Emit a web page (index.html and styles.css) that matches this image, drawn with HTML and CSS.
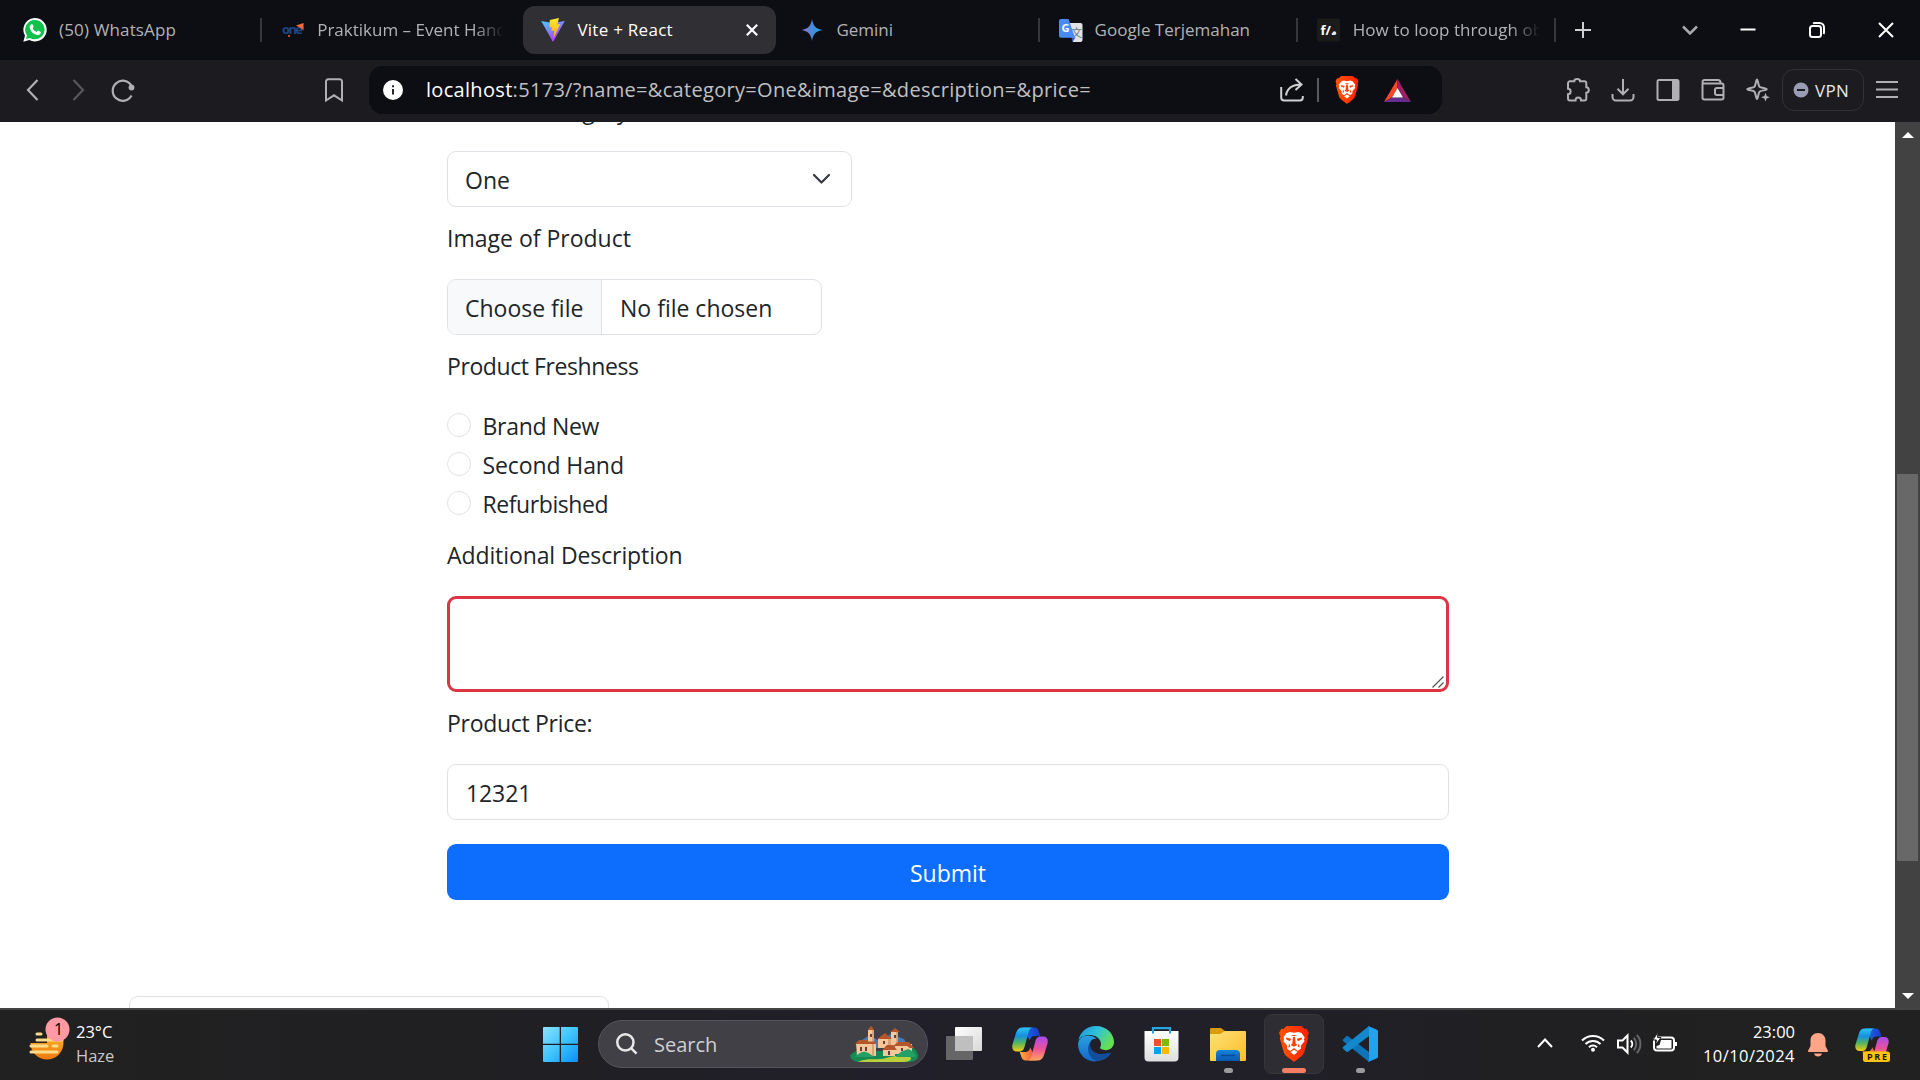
FILE: index.html
```html
<!DOCTYPE html>
<html lang="en">
<head>
<meta charset="utf-8">
<title>Vite + React</title>
<link rel="stylesheet" href="styles.css">
</head>
<body>
<svg class="defs" width="0" height="0" aria-hidden="true">
  <defs>
    <linearGradient id="lionfill" x1="0" x2="1"><stop offset="0" stop-color="#ff5500"/><stop offset="1" stop-color="#ff2000"/></linearGradient>
    <linearGradient id="cp1" x1="0" y1="0" x2="0" y2="1"><stop offset="0" stop-color="#2cc4f0"/><stop offset=".35" stop-color="#1590e0"/><stop offset=".65" stop-color="#55b560"/><stop offset="1" stop-color="#f2cc10"/></linearGradient>
    <linearGradient id="cp2" x1="0" y1="0" x2="0" y2="1"><stop offset="0" stop-color="#a64cf0"/><stop offset=".5" stop-color="#ee4f9a"/><stop offset="1" stop-color="#ffa45c"/></linearGradient>
    <linearGradient id="cp3" x1="0" x2="1"><stop offset="0" stop-color="#1a6fe0"/><stop offset="1" stop-color="#1b38c8"/></linearGradient>
    <linearGradient id="cp4" x1="0" x2="1"><stop offset="0" stop-color="#ffb040"/><stop offset="1" stop-color="#ee4040"/></linearGradient>
  </defs>
  <symbol id="lion" viewBox="0 0 30 36">
    <path class="lion-shield" d="M7.5 0h15l3.2 3 2-.2L30 7l-1.4 3 .6 2.2-3.7 13.3c-.6 2.2-1.6 3.6-3.4 4.9L15 36l-7.1-5.6c-1.8-1.3-2.8-2.7-3.4-4.9L.8 12.200 1.400 10 0 7l2.300-4.200 2 .2z"/>
    <path fill="#fff" d="M15 6.800l4.400-.900 3.100 1.100 3.100 4.300-.700 2.400.7 1.400-3.800 4.700.2 2.700-3.200 2.400L15 22l-3.800 2.900L8 22.500l.2-2.700-3.800-4.700.7-1.400-.7-2.400L7.500 7l3.100-1.100zM15 23.800l3.600 2.200-3.600 3-3.600-3z"/>
    <path class="lion-detail" d="M7 11.500l5.200 1.300-1.200 2.400-3.600-1.700zM23 11.500l-5.200 1.300 1.200 2.400 3.600-1.700zM11.800 9.300L15 9l3.200.3L15 10.200zM14 11h2l.7 6.500 1.600 1.400L15 20.700l-3.300-1.800 1.600-1.400zM10 17l1.300 3.500-1.900 1.300zM20 17l-1.300 3.500 1.900 1.300z"/>
  </symbol>
  <symbol id="copilot" viewBox="0 0 36 34">
    <path fill="url(#cp3)" d="M11 .5h11c3 0 4.200 2 5 4.800l1.200 3.700h-5.500c-3 0-4.200 2-5 4.500z"/>
    <path fill="url(#cp4)" d="M25 33.500H14c-3 0-4.200-2-5-4.800L7.800 25h5.500c3 0 4.200-2 5-4.500z"/>
    <path fill="url(#cp1)" d="M10.500.5H21c-2.600 0-3.600 2-4.300 4.300L12.800 19c-.9 3.200-2 5.500-5.500 5.500H5c-4 0-5.500-3-4.500-7L4 6C5 2.500 7 .5 10.500.5z"/>
    <path fill="url(#cp2)" d="M25.500 33.500H15c2.600 0 3.600-2 4.300-4.300L23.200 15c.9-3.200 2-5.500 5.500-5.500H31c4 0 5.500 3 4.500 7L32 28c-1 3.500-3 5.500-6.500 5.500z"/>
  </symbol>
</svg>

<div class="screen">
  <header class="tabstrip">
    <div class="tab">
      <svg class="favicon" viewBox="0 0 24 24"><path fill="#fff" d="M.3 23.800l1.700-6A11.700 11.700 0 1 1 6.300 22z"/><path fill="#12c04c" d="M3 21l1-3.700A9.700 9.700 0 1 1 7 20z"/><path fill="#fff" d="M8.200 6.300c.5-.5 1.200-.4 1.500.2l.8 1.900c.1.400 0 .8-.3 1.100l-.6.7c.9 1.700 2.200 2.900 4 3.700l.9-1c.3-.3.600-.4 1-.2l1.900 1c.4.200.5.500.4 1-.3 1.600-1.900 2.600-3.500 2.300-4.200-.8-7.100-3.900-7.600-7.400-.1-1.300.5-2.500 1.500-3.300z"/></svg>
      <span class="tab-title t-wa">(50) WhatsApp</span>
    </div>
    <div class="tab ruled">
      <svg class="favicon" viewBox="0 0 24 24"><text class="one-mark" x="1" y="16" textLength="21">one</text><path fill="#f26a3c" d="M15 7.500L22.500 5v7.500l-2-2z"/><circle cx="8" cy="18" r="1" fill="#f26a3c"/></svg>
      <span class="tab-title fade">Praktikum – Event Handling</span>
    </div>
    <div class="tab active">
      <svg class="favicon" viewBox="0 0 24 24"><defs><linearGradient id="va" x1="0" y1="0" x2=".6" y2="1"><stop offset="0" stop-color="#41d1ff"/><stop offset="1" stop-color="#bd34fe"/></linearGradient><linearGradient id="vb" x1="0" y1="0" x2="0" y2="1"><stop offset="0" stop-color="#ffea3d"/><stop offset="1" stop-color="#ffa800"/></linearGradient></defs><path fill="url(#va)" d="M.2 3l11.500 2L23.800 3 12 24z"/><path fill="url(#vb)" d="M8.800 2L18 0l-1.700 6.500 3-.6L12.500 20l.8-7.500-3 .6.500-4L8.500 9.500z"/></svg>
      <span class="tab-title t-vi">Vite + React</span>
      <svg class="tab-close" viewBox="0 0 12 12"><path d="M.8.8l10.400 10.400M11.200.8L.8 11.200"/></svg>
    </div>
    <div class="tab">
      <svg class="favicon" viewBox="0 0 24 24"><defs><linearGradient id="ge" x1="0" x2="1"><stop offset="0" stop-color="#9b72cb"/><stop offset=".45" stop-color="#4f88d6"/><stop offset="1" stop-color="#1ba1e3"/></linearGradient></defs><path fill="url(#ge)" d="M12 1c.8 6.500 4.300 10.200 10.500 11-6.200.8-9.700 4.500-10.500 11C11.200 16.500 7.700 12.800 1.500 12c6.200-.8 9.700-4.500 10.500-11z"/></svg>
      <span class="tab-title">Gemini</span>
    </div>
    <div class="tab ruled">
      <svg class="favicon" viewBox="0 0 24 24"><path fill="#e1e2e3" d="M10 5h11.500a2 2 0 0 1 2 2v15a2 2 0 0 1-2 2H14z"/><text class="han" x="12" y="19">文</text><path fill="#3b56c4" d="M12.500 19.500h4L13.500 24z"/><path fill="#4a8af4" d="M2 1h7.500l6.500 18.700H2a2 2 0 0 1-2-2V3a2 2 0 0 1 2-2z"/><text class="g-mark" x="2.500" y="13.500">G</text></svg>
      <span class="tab-title">Google Terjemahan</span>
    </div>
    <div class="tab ruled">
      <svg class="favicon" viewBox="0 0 24 24"><rect width="23" height="23" y=".5" rx="2" fill="#1b1b1b"/><text class="f-mark" x="3.500" y="17">f/.</text><circle cx="17.300" cy="15.200" r="1.900" fill="#e8e8e8"/></svg>
      <span class="tab-title fade t-ho">How to loop through objects</span>
    </div>
    <div class="newtab ruled"><svg viewBox="0 0 16 16" width="16" height="16"><path d="M8 0v16M0 8h16"/></svg></div>
    <div class="winbtns">
      <svg class="chev" viewBox="0 0 16 10"><path d="M1 1.500l7 7 7-7"/></svg>
      <svg viewBox="0 0 16 16"><path d="M.5 7.500h15"/></svg>
      <svg viewBox="0 0 16 16"><rect x="1" y="4" width="11" height="11" rx="2.500"/><path d="M4 1.500c.6-.4 1.200-.5 2-.5h4.500A4.500 4.500 0 0 1 15 5.500V10c0 .8-.1 1.400-.5 2"/></svg>
      <svg viewBox="0 0 16 16"><path d="M1 1l14 14M15 1L1 15"/></svg>
    </div>
  </header>

  <nav class="toolbar">
    <div class="navbtns">
      <svg viewBox="0 0 24 24"><path d="M16.500 2L7 12l9.500 10"/></svg>
      <svg class="dim" viewBox="0 0 24 24"><path d="M7.500 2L17 12 7.500 22"/></svg>
      <svg viewBox="0 0 24 24"><path d="M20.500 17.500A10 10 0 1 1 20.500 8"/><circle class="solid" cx="20.500" cy="9.500" r="2.900"/></svg>
    </div>
    <svg class="bookmark" viewBox="0 0 18 24"><path d="M1 3.500A2.200 2.200 0 0 1 3.200 1.300h11.600A2.200 2.200 0 0 1 17 3.500v19l-8-5.200-8 5.200z"/></svg>
    <div class="urlbar">
      <svg class="info" viewBox="0 0 20 20"><circle cx="10" cy="10" r="10" fill="#fff"/><path stroke="#101116" stroke-width="1.800" d="M10 9v5.500M10 5.200v2"/></svg>
      <span class="url"><b>localhost</b>:5173/?name=&amp;category=One&amp;image=&amp;description=&amp;price=</span>
      <svg class="share" viewBox="0 0 24 24"><path d="M1.200 9v10.500a3 3 0 0 0 3 3h15.600a3 3 0 0 0 3-3V18M6 17.500C7 10.500 12 6.500 21.500 6.500M15.500 1l6 5.500-6 5.500"/></svg>
      <i class="vline"></i>
      <svg class="lion small" viewBox="0 0 30 36"><use href="#lion"/></svg>
      <svg class="bat" viewBox="0 0 27 23"><path fill="#ff4724" d="M13.500 0v9L8 18.500 0 23z"/><path fill="#9e1f63" d="M13.500 0v9l5.500 9.500 8 4.500z"/><path fill="#662d91" d="M0 23l8-4.500h11l8 4.500z"/><path fill="#fff" d="M13.500 9L19 18.500H8z"/></svg>
    </div>
    <div class="tools">
      <svg viewBox="0 0 24 24"><path d="M2 5.300a2 2 0 0 1 2-2h4.300C8.300.3 14 .3 14 3.300h4.300a2 2 0 0 1 2 2v3.900c3.300 0 3.300 5.600 0 5.600v5.700a2 2 0 0 1-2 2H15c0-4-5.500-4-5.500 0H4a2 2 0 0 1-2-2v-4.300c3.500 0 3.500-5.500 0-5.500z"/></svg>
      <svg viewBox="0 0 24 24"><path d="M12 1v15M6.500 10.800L12 16.300l5.500-5.500M1.500 16v3a3.500 3.500 0 0 0 3.500 3.500h14a3.500 3.500 0 0 0 3.500-3.500v-3"/></svg>
      <svg viewBox="0 0 24 24"><rect x="1.500" y="2" width="21" height="20" rx="1.500"/><path class="solid" d="M16 2h6.500v20H16z"/></svg>
      <svg viewBox="0 0 24 24"><path d="M1.500 5v14.500a2 2 0 0 0 2 2h17a2 2 0 0 0 2-2V7.500a2 2 0 0 0-2-2h-17A2 2 0 0 1 1.500 3.800 2 2 0 0 1 3.500 2H17a2.500 2.500 0 0 1 2.500 2.500v1M22.500 10H16a2 2 0 0 0-2 2v3a2 2 0 0 0 2 2h6.500"/></svg>
      <svg viewBox="0 0 24 24"><path d="M11 1.500c.8 0 1.300 6 2.500 7.200s7.200 1.500 7.200 2.500-6 1.300-7.200 2.500-1.500 7.300-2.500 7.300-1.300-6-2.500-7.300-7.200-1.500-7.200-2.500 6-1.300 7.200-2.500 1.500-7.200 2.500-7.200z"/><path class="solid" d="M19.500 14.800l1.200 3.200 3.200 1.200-3.200 1.200-1.200 3.200-1.200-3.200-3.200-1.200 3.200-1.200z"/></svg>
    </div>
    <div class="vpn"><svg viewBox="0 0 16 16"><circle cx="8" cy="8" r="7.500" fill="#9a9cb5"/><path d="M4 8h8" stroke="#1c1b1f" stroke-width="2"/></svg><span>VPN</span></div>
    <svg class="burger" viewBox="0 0 22 18"><path d="M0 1h22M0 8.500h22M0 16h22"/></svg>
  </nav>

  <main class="viewport">
    <div class="page">
      <form class="form">
        <label class="label snug">Product Category</label>
        <div class="control select"><span>One</span><svg viewBox="0 0 24 24"><path d="M4 8l7.500 7.500L19 8"/></svg></div>
        <label class="label">Image of Product</label>
        <div class="control file"><span class="choose">Choose file</span><span class="nofile">No file chosen</span></div>
        <label class="label tight">Product Freshness</label>
        <div class="radios">
          <label class="radio snug"><input type="radio" name="freshness"><span>Brand New</span></label>
          <label class="radio near"><input type="radio" name="freshness"><span>Second Hand</span></label>
          <label class="radio tight"><input type="radio" name="freshness"><span>Refurbished</span></label>
        </div>
        <label class="label near">Additional Description</label>
        <div class="control area"><svg viewBox="0 0 12 12"><path d="M.5 11.500l11-11M6.500 11.500l5-5"/></svg></div>
        <label class="label snug">Product Price:</label>
        <div class="control price">12321</div>
        <button type="button" class="submit">Submit</button>
      </form>
      <div class="card"></div>
    </div>
    <div class="scrollbar">
      <svg viewBox="0 0 12 6"><path d="M0 6l6-6 6 6z"/></svg>
      <i class="thumb"></i>
      <svg viewBox="0 0 12 6"><path d="M0 0l6 6 6-6z"/></svg>
    </div>
  </main>

  <footer class="taskbar">
    <div class="weather">
      <svg viewBox="0 0 36 46" width="36" height="46"><defs><linearGradient id="sun" x1="0" y1="0" x2="0" y2="1"><stop offset="0" stop-color="#fcc62e"/><stop offset="1" stop-color="#f0780f"/></linearGradient></defs><circle cx="18" cy="27" r="16.500" fill="url(#sun)"/><path fill="#212121" d="M0 8h18v19H0z"/><path stroke="#fbdc8a" stroke-width="3" stroke-linecap="round" d="M8 18h4M8 24h25M2 30h16M24 30h4M2 36h26"/><circle cx="28.500" cy="13.500" r="12" fill="#ff99a4"/><text class="badge-n" x="25" y="19">1</text></svg>
      <div class="wtext"><span>23°C</span><span class="haze">Haze</span></div>
    </div>
    <div class="dock">
      <svg class="start" viewBox="0 0 35 35"><defs><linearGradient id="win" x1="0" y1="0" x2="1" y2="1"><stop offset="0" stop-color="#8be2ff"/><stop offset=".5" stop-color="#3fc4fc"/><stop offset="1" stop-color="#0a8ff6"/></linearGradient></defs><path fill="url(#win)" d="M1 0h15.700v16.700H0V1a1 1 0 0 1 1-1zM18 0h16a1 1 0 0 1 1 1v15.700H18zM0 18h16.700v17H1a1 1 0 0 1-1-1zM18 18h17v16a1 1 0 0 1-1 1H18z"/></svg>
      <div class="search">
        <svg class="glass" viewBox="0 0 23 23"><circle cx="9.800" cy="9.800" r="8.500"/><path d="M16 16l5.500 5.500"/></svg>
        <span>Search</span>
        <svg class="castle" viewBox="0 0 68 37">
          <path fill="#4a78b4" d="M12 14l8-5 12 8 8-9 14 5 5 9H12z"/>
          <path fill="#168a54" d="M0 30c4-6 9-5 14-5h40c6-8 13-2 14 4 1 4-4 7-8 7H10c-5 0-9-2-10-6z"/>
          <path fill="#b8cf3e" d="M8 36c10-5 18-1 28-4s18-2 24-1c3 2-1 5-6 5z"/>
          <path fill="#f3c79a" d="M6 17h20v13H7zM18 4h6v13h-6zM28 12h13v10H28zM41 5h7v15h-7zM33 23h12v7H33zM45 18h17v10H45z"/>
          <path fill="#d9a474" d="M22 4h2v26h-2zM38 12h3v8h-3zM46 5h2v13h-2z"/>
          <path fill="#b5562a" d="M18.500 2.500L21 0l2.500 2.500V4h-5zM5 18l4-4h9v1.500h8V18zM27 13l8-6 7 6zM40 6l5-4 5 4zM32 24l5-5h6l4 5zM43 20l5-4h11l5 6h-4l-3-2z"/>
          <path fill="#6b3a3a" d="M10 21h2v4h-2zM15 21h2v4h-2zM20 8h2v3h-2zM33 15h2v3h-2zM44 9h2v3h-2zM38 25h2v4h-2zM51 22h2v3h-2z"/>
          <path fill="#22a065" d="M10 27c5-3 9 0 14 4H4zM46 31c4-6 8-6 12-8 5 2 8 5 8 8z"/>
        </svg>
      </div>
      <div class="apps">
        <div class="app"><svg viewBox="0 0 36 36"><defs><linearGradient id="tv" x1="0" y1="0" x2="1" y2="1"><stop offset="0" stop-color="#fff"/><stop offset="1" stop-color="#d8d8d8"/></linearGradient></defs><rect y="10" width="27" height="24" rx="1" fill="#666"/><rect x="9" y="1" width="27" height="24" rx="1" fill="url(#tv)"/><path fill="#bfbfbf" d="M9 10h18v15H9z"/></svg></div>
        <div class="app"><svg viewBox="0 0 36 36"><use href="#copilot" width="36" height="34" y="1"/></svg></div>
        <div class="app"><svg viewBox="0 0 36 36"><defs><linearGradient id="ed1" x1="0" y1="0" x2="1" y2=".5"><stop offset="0" stop-color="#1c8ed8"/><stop offset=".5" stop-color="#2fc2dc"/><stop offset="1" stop-color="#66e050"/></linearGradient><linearGradient id="ed2" x1="0" y1="0" x2="0" y2="1"><stop offset="0" stop-color="#2aa0e0"/><stop offset="1" stop-color="#1368c8"/></linearGradient></defs><path fill="url(#ed2)" d="M0 18C1 9 12 7 19 13c-6-1-8 4-7 9 1 6 7 10 13 11-12 7-25-2-25-15z"/><path fill="url(#ed1)" d="M.5 14C2 6 9 0 18 0c11 0 18 8 18 16 0 7-7 10-13 7-2-1 0-2 0-5 0-5-5-9-11-9C7 9 2.500 11 .5 14z"/><path fill="#124e9c" d="M13 15c-3 6 2 13 10 13 5 0 8-2 10-1-2 4-7 8-14 8-8-2-12-13-6-20z"/></svg></div>
        <div class="app"><svg viewBox="0 0 36 36"><defs><linearGradient id="st" x1="0" y1="0" x2="0" y2="1"><stop offset="0" stop-color="#fff"/><stop offset="1" stop-color="#dedede"/></linearGradient></defs><path fill="none" stroke="#26a6e0" stroke-width="2.200" d="M9 7V2.200h17V7"/><path fill="url(#st)" d="M.5 5h34v26.500a4 4 0 0 1-4 4h-26a4 4 0 0 1-4-4z"/><path fill="none" stroke="#26a6e0" stroke-width="2" d="M9 4v3.500M26 4v3.500"/><path fill="#f25022" d="M10 13h7v7h-7z"/><path fill="#7fba00" d="M18 13h7v7h-7z"/><path fill="#00a4ef" d="M10 21h7v7h-7z"/><path fill="#ffb900" d="M18 21h7v7h-7z"/></svg></div>
        <div class="app dot"><svg viewBox="0 0 36 36"><defs><linearGradient id="fo" x1="0" y1="0" x2="1" y2="1"><stop offset="0" stop-color="#ffe07a"/><stop offset="1" stop-color="#fcbf24"/></linearGradient><linearGradient id="fb" x1="0" y1="0" x2="0" y2="1"><stop offset="0" stop-color="#1484dc"/><stop offset="1" stop-color="#0a58b0"/></linearGradient></defs><path fill="#dc9a08" d="M0 3a1 1 0 0 1 1-1h10l4 3v5H0z"/><path fill="url(#fo)" d="M0 8h10l5-3h20a1 1 0 0 1 1 1v28a1 1 0 0 1-1 1H1a1 1 0 0 1-1-1z"/><path fill="url(#fb)" d="M6 35v-7a4 4 0 0 1 4-4h16a4 4 0 0 1 4 4v7z"/><path stroke="#0a4890" stroke-width="1.500" d="M11 29.500h14"/></svg></div>
        <div class="app current"><svg class="lion big" viewBox="0 0 30 36"><use href="#lion"/></svg></div>
        <div class="app dot"><svg viewBox="0 0 36 36"><path fill="#0f73b8" d="M1 13.500l3-3c.8-.6 1.600-.6 2.400 0L27 26v10L1.500 15.500c-.8-.7-1-1.300-.5-2z"/><path fill="#1388cc" d="M1 22.500l3 3c.8.6 1.600.6 2.400 0L27 10V0L1.500 20.500c-.8.700-1 1.300-.5 2z"/><path fill="#25a2ee" d="M26 0l8.500 3.500c1 .5 1.500 1 1.500 2v25c0 1-.5 1.500-1.500 2L26 36c.8-1 1-1.500 1-3V3c0-1.500-.2-2-1-3z"/></svg></div>
      </div>
    </div>
    <div class="tray">
      <svg class="up" viewBox="0 0 16 10"><path d="M1 9l7-7.500L15 9"/></svg>
      <svg class="wifi" viewBox="0 0 24 18"><path d="M1 6.500a15.500 15.500 0 0 1 22 0M4.500 10a10.600 10.600 0 0 1 15 0M8 13.200a5.700 5.700 0 0 1 8 0"/><circle class="fillw" cx="12" cy="15.800" r="2"/></svg>
      <svg class="vol" viewBox="0 0 25 20"><path d="M1 6.500h4.500L10.500 1.500v17L5.500 13.500H1z"/><path d="M13.800 6.500a5 5 0 0 1 0 7"/><path class="faint" d="M16.800 3.800a9 9 0 0 1 0 12.400M19.800 1a13 13 0 0 1 0 18"/></svg>
      <svg class="batt" viewBox="0 0 25 20"><rect x="1" y="5.500" width="20" height="13" rx="3"/><path class="fillw" d="M8 8h10.500v8.500h-15V14l3-1z"/><path class="fillw" d="M22 10h2v4h-2z"/><path class="bolt" d="M5 0L0 8h3.500L2.500 13 8 5.500H4.500z"/></svg>
      <div class="clock"><span>23:00</span><span class="date">10/10/2024</span></div>
      <svg class="bell" viewBox="0 0 20 24"><path d="M10 0c4.500 0 7.500 3.200 7.500 7.500V13l2.300 4.500c.4.900 0 1.500-.8 1.500H1c-.8 0-1.200-.6-.8-1.500L2.500 13V7.500C2.500 3.200 5.500 0 10 0zM6 20.500h8c-.5 2-2 3-4 3s-3.500-1-4-3z"/></svg>
      <svg class="pre" viewBox="0 0 36 36"><use href="#copilot" width="34" height="32" y="1"/><rect x="8" y="24.500" width="27" height="10.500" rx="2.500" fill="#ffc50f"/><text class="pre-t" x="12" y="33" textLength="20">PRE</text></svg>
    </div>
  </footer>
</div>
</body>
</html>
```
FILE: styles.css
```css
* { box-sizing: border-box; }
body { margin: 0; font-family: "Open Sans", "Noto Sans", sans-serif; }
svg { display: block; flex: none; overflow: visible; }
span { white-space: nowrap; }
.defs { position: absolute; }
.screen { width: 1920px; height: 1080px; display: flex; flex-direction: column; overflow: hidden; background: #fff; }

/* tab strip */
.tabstrip { height: 60px; flex: none; display: flex; align-items: center; background: #0d0e13; padding-left: 3px; }
.tab { width: 258.200px; height: 48px; flex: none; display: flex; align-items: center; padding-left: 20px; position: relative; }
.favicon { width: 24px; height: 24px; margin-right: 12px; }
.tab-title { height: 48px; line-height: 48px; font-size: 17px; color: #b2b2b5; overflow: hidden; }
.t-wa { letter-spacing: .15px; }
.t-vi { letter-spacing: .27px; }
.t-ho { letter-spacing: .05px; }
.fade { width: 187px; -webkit-mask-image: linear-gradient(90deg, #000 84%, transparent); mask-image: linear-gradient(90deg, #000 84%, transparent); }
.ruled::before { content: ""; position: absolute; left: -1px; top: 12px; width: 2px; height: 24px; background: #37373b; }
.tab.active { width: 253px; margin: 0 4px; padding: 0 18px; background: #302f34; border-radius: 12px; }
.tab-title.t-vi { color: #fff; flex: 1; }
.tab-close { width: 12px; height: 12px; stroke: #fff; stroke-width: 2.200; }
.one-mark { font: 700 13px "Open Sans", sans-serif; fill: #1d4684; }
.han { font: 11px "Noto Sans CJK SC", sans-serif; fill: #5d7a86; }
.g-mark { font: 700 11px "Open Sans", sans-serif; fill: #fff; }
.f-mark { font: 700 13px "Open Sans", sans-serif; fill: #fff; }
.newtab { position: relative; width: 56px; height: 48px; display: flex; align-items: center; padding-left: 20px; }
.newtab svg { stroke: #d0d0d2; stroke-width: 2; }
.winbtns { margin-left: auto; display: flex; align-items: center; gap: 53px; padding-right: 26px; }
.winbtns svg { width: 16px; height: 16px; fill: none; stroke: #fff; stroke-width: 2; }
.winbtns .chev { height: 10px; margin-right: -11px; stroke: #a9a9ac; stroke-width: 2.500; }

/* address row */
.toolbar { height: 62px; flex: none; display: flex; align-items: center; background: #1c1b1f; padding: 0 22px 2px 21px; }
.toolbar > svg, .navbtns svg, .tools svg { fill: none; stroke: #b0afb3; stroke-width: 2; }
.navbtns { display: flex; gap: 21px; }
.navbtns svg { width: 24px; height: 24px; stroke-width: 2.200; }
.navbtns .dim { stroke: #58585c; }
.toolbar .solid { fill: #b0afb3; stroke: none; }
.toolbar .bookmark { width: 18px; height: 24px; margin-left: 190px; }
.urlbar { width: 1074px; height: 48px; margin-left: 26px; display: flex; align-items: center; background: #0d0e13; border-radius: 14px; padding-left: 14px; }
.info { width: 20px; height: 20px; }
.url { width: 854px; margin-left: 23px; font-size: 20px; letter-spacing: .31px; line-height: 48px; color: #c0c0c3; }
.url b { font-weight: 400; color: #fff; }
.share { width: 24px; height: 24px; fill: none; stroke: #d0d0d3; stroke-width: 2; }
.vline { width: 2px; height: 24px; background: #5a5a5e; margin: 0 16px 0 13px; }
.lion-detail { fill: #ff4000; }
.lion-shield { fill: url(#lionfill); }
.small { width: 24px; height: 28px; }
.bat { width: 27px; height: 23px; margin-left: 25px; }
.tools { display: flex; gap: 21px; margin-left: 124px; }
.tools svg { width: 24px; height: 24px; }
.vpn { width: 82px; height: 42px; margin-left: 12px; display: flex; align-items: center; gap: 6px; padding-left: 10px; border: 1.500px solid #333236; border-radius: 12px; color: #e8e8ea; font-size: 17px; letter-spacing: .3px; }
.vpn svg { width: 16px; height: 16px; }
.toolbar .burger { width: 22px; height: 18px; margin-left: 12px; }

/* page */
.viewport { height: 886px; flex: none; display: flex; overflow: hidden; }
.page { width: 1895px; overflow: hidden; color: #212529; font-size: 23px; }
.form { width: 1002px; margin: -31px 0 0 447px; }
.label { display: block; height: 36px; line-height: 38px; margin: 12px 0 24px; }
.form > .label:first-child { margin-top: 0; }
.near { letter-spacing: -.1px; }
.snug { letter-spacing: -.3px; }
.tight { letter-spacing: -.42px; }
.control { height: 56px; line-height: 56px; border: 1px solid #dee2e6; border-radius: 9px; padding-left: 17px; }
.select { width: 405px; display: flex; justify-content: space-between; padding-right: 17px; }
.select svg { width: 24px; height: 24px; margin-top: 15px; }
.select path { fill: none; stroke: #343a40; stroke-width: 2.200; stroke-linecap: round; stroke-linejoin: round; }
.file { width: 375px; display: flex; overflow: hidden; padding-left: 0; }
.choose { width: 154px; padding-left: 17px; background: #f8f9fa; border-right: 1px solid #dee2e6; }
.nofile { padding-left: 18px; }
.radios { display: grid; gap: 3px; padding-bottom: 3px; }
.radio { height: 36px; line-height: 38px; display: flex; }
.radio input { appearance: none; width: 24px; height: 24px; margin: 6px 11.500px 0 0; border: 1px solid #dee2e6; border-radius: 50%; }
.area { height: 96px; border: 3px solid #dc3545; display: flex; justify-content: flex-end; align-items: flex-end; padding: 0 2px 1px 0; }
.area svg { width: 12px; height: 12px; stroke: #555; stroke-width: 1.200; }
.price { padding-left: 18px; letter-spacing: -.1px; }
.submit { width: 1002px; height: 56px; line-height: 58px; margin-top: 24px; padding: 0; border: 0; border-radius: 9px; background: #0d6efd; color: #fff; font-family: inherit; font-size: 23px; display: block; }
.card { width: 480px; height: 60px; margin: 96px 0 0 129px; border: 1px solid #dee2e6; border-radius: 9px; }
.scrollbar { width: 25px; background: #424242; display: flex; flex-direction: column; align-items: center; padding: 10px 0 9px; }
.scrollbar svg { width: 12px; height: 6px; fill: #fff; }
.thumb { width: 21px; height: 387px; margin: 336px 0 auto; background: #686868; }

/* taskbar */
.taskbar { height: 72px; flex: none; display: flex; background: linear-gradient(90deg, #212121, #201f22 25%, #211f29 45%, #211f28 65%, #202022 80%, #212121); border-top: 2px solid #454545; color: #fff; font-size: 16.500px; }
.weather { width: 543px; display: flex; padding: 6px 0 0 29px; gap: 11px; }
.badge-n { font: 16px "Open Sans", sans-serif; fill: #000; }
.wtext, .clock { display: flex; flex-direction: column; line-height: 24px; }
.wtext { padding-top: 4px; }
.haze { color: #c8c8c8; }
.dock { width: 994px; display: flex; }
.start { width: 35px; height: 35px; margin-top: 17px; }
.search { width: 330px; height: 48px; margin: 10px 3px 0 20px; display: flex; align-items: center; padding: 0 9px 0 17px; border: 1.500px solid #55545b; border-radius: 24px; background: #414046; color: #d0d0d2; font-size: 20px; }
.glass { width: 22px; height: 22px; margin-right: 16px; fill: none; stroke: #e8e8e8; stroke-width: 2.600; }
.castle { width: 68px; height: 37px; margin-left: auto; }
.apps { display: flex; }
.app { width: 66px; height: 60px; margin-top: 4px; padding: 12px 15px 0; position: relative; }
.app svg { width: 36px; height: 36px; }
.app .big { width: 30px; height: 36px; }
.app::after { content: none; position: absolute; bottom: 1px; left: 28.500px; width: 9px; height: 5px; border-radius: 3px; background: #9b9b9e; }
.app.dot::after, .app.current::after { content: ""; }
.app.current { width: 60px; margin: 4px 3px 0; padding: 11px 0 0 14px; background: #2e2d33; border: 1px solid #38373c; border-radius: 8px; }
.app.current::after { width: 24px; left: 17px; bottom: 0; background: #f47d66; }
.tray { display: flex; }
.tray svg { fill: none; stroke: #fff; stroke-width: 2; }
.tray .fillw { fill: #fff; stroke: none; }
.up { width: 16px; height: 10px; margin-top: 28px; }
.wifi { width: 24px; height: 18px; margin: 24px 0 0 28px; }
.vol { width: 25px; height: 20px; margin: 24px 0 0 12px; }
.vol .faint { stroke: #66666a; }
.batt { width: 25px; height: 20px; margin: 22px 0 0 11px; }
.tray .bolt { fill: #fff; stroke: #212121; stroke-width: 1; }
.clock { width: 117px; align-items: flex-end; padding-top: 10px; }
.date { letter-spacing: .45px; }
.tray .bell { width: 20px; height: 24px; margin: 23px 0 0 13px; fill: #ffa588; stroke: none; }
.tray .pre { width: 36px; height: 36px; margin: 17px 0 0 27px; stroke: none; }
.pre-t { font: 700 9px "Open Sans", sans-serif; fill: #1c1600; }
```
